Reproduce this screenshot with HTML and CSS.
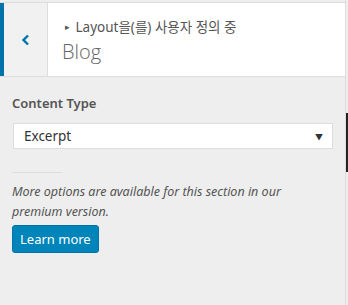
FILE: index.html
```html
<!DOCTYPE html>
<html lang="ko">
<head>
    <meta charset="UTF-8">
    <title>Blog</title>
    <link rel="stylesheet" href="styles.css">
</head>
<body>
    <div class="panel">
        <div class="section-title">
            <button class="back-button" aria-label="Back">
                <svg width="10" height="12" viewBox="0 0 10 12"><path d="M7 1.5 L2.5 6 L7 10.5" fill="none" stroke="#0073aa" stroke-width="2.4"/></svg>
            </button>
            <div class="title-text">
                <div class="breadcrumb"><span class="crumb-arrow">&#9656;</span> Layout을(를) 사용자 정의 중</div>
                <h3 class="section-name">Blog</h3>
            </div>
        </div>

        <div class="controls">
            <label class="control-label">Content Type</label>
            <div class="select-box">
                <span>Excerpt</span>
                <span class="select-arrow">&#9660;</span>
            </div>
            <hr class="divider">
            <p class="premium-note">More options are available for this section in our premium version.</p>
            <button class="learn-more">Learn more</button>
        </div>
    </div>
    <div class="preview">
        <div class="preview-edge"></div>
    </div>
</body>
</html>
```

FILE: styles.css
```css
body {
    margin: 0;
    background-color: #eee;
    font-family: "Noto Sans", "Noto Sans CJK KR", sans-serif;
    color: #555;
    display: flex;
    height: 305px;
    overflow: hidden;
}
.panel {
    width: 345px;
    border-right: 1px solid #ddd;
    padding-top: 2px;
}
.section-title {
    display: flex;
    height: 73px;
    background: #fff;
    border-top: 1px solid #ddd;
    border-bottom: 1px solid #ddd;
}
.back-button {
    width: 48px;
    border: none;
    border-left: 4px solid #0073aa;
    border-right: 1px solid #ddd;
    background: #f1f1f1;
    padding: 0;
    display: flex;
    align-items: center;
    justify-content: center;
}
.title-text {
    padding: 10px 14px;
}
.breadcrumb {
    font-size: 13.5px;
    line-height: 20px;
    padding-left: 3px;
    margin-top: 4px;
}
.crumb-arrow {
    font-size: 9px;
    vertical-align: 2px;
    margin-right: 2px;
}
.section-name {
    margin: 2px 0 0;
    font-family: "Open Sans", "Noto Sans", sans-serif;
    font-size: 20px;
    font-weight: 300;
    line-height: 26px;
    color: #666;
}
.controls {
    padding: 16px 12px;
}
.control-label {
    display: block;
    font-size: 13px;
    font-weight: 600;
    line-height: 20px;
    margin-bottom: 10px;
}
.select-box {
    display: flex;
    justify-content: space-between;
    align-items: center;
    height: 26px;
    margin-left: 1px;
    padding: 0 9px 0 10px;
    box-sizing: border-box;
    width: 320px;
    background: #fff;
    border: 1px solid #ddd;
    font-size: 13.5px;
    color: #333;
}
.select-arrow {
    font-size: 8px;
    color: #333;
}
.divider {
    width: 50px;
    margin: 23px 0 9px;
    border: none;
    border-top: 1px solid #ddd;
}
.premium-note {
    margin: 0;
    font-size: 12.5px;
    font-style: italic;
    line-height: 20px;
    color: #555;
    width: 300px;
}
.learn-more {
    margin-top: 3px;
    height: 28px;
    padding: 0 7px;
    background: #0085ba;
    border: 1px solid #0073aa;
    border-radius: 3px;
    color: #fff;
    font-family: inherit;
    font-size: 13px;
}
.preview {
    flex: 1;
}
.preview-edge {
    margin-top: 113px;
    height: 59px;
    background: #222;
}
```
